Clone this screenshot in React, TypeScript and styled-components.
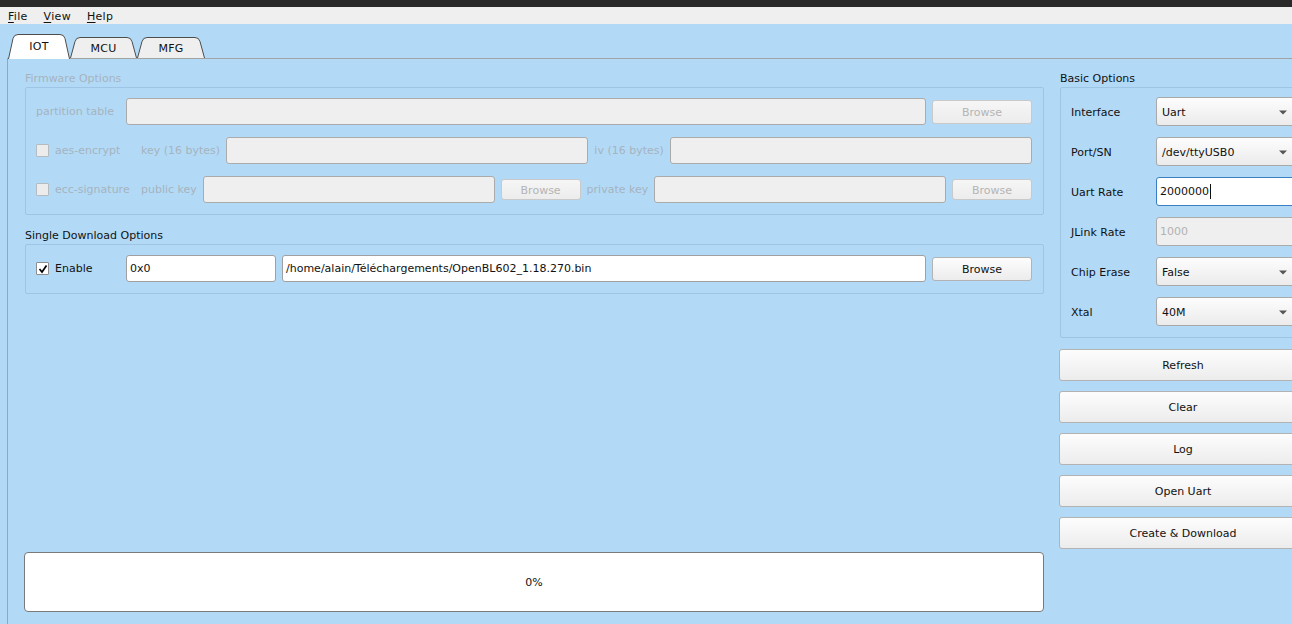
import styled, { createGlobalStyle } from "styled-components"

const BLUE = "#b2daf7"
const DIS_TEXT = "#a6b3bd"

const GlobalStyle = createGlobalStyle`
  html, body {
    margin: 0;
    padding: 0;
    overflow: hidden;
    background: ${BLUE};
  }
  body {
    font-family: "DejaVu Sans", "Liberation Sans", sans-serif;
    font-size: 11px;
    color: #111;
  }
`

const Window = styled.div`
  width: 1340px;
  height: 637px;
  display: flex;
  flex-direction: column;
  background: ${BLUE};
`

const TitleStrip = styled.div`
  height: 7px;
  background: #2a2a2a;
`

const MenuBar = styled.div`
  height: 17px;
  display: flex;
  align-items: center;
  background: #efefef;
`

const MenuItem = styled.span`
  padding: 1px 8px 0;
  line-height: 17px;
  letter-spacing: 0.3px;
  color: #111;

  u {
    text-underline-offset: 2px;
  }
`

const TabBar = styled.div`
  height: 34px;
  display: flex;
  align-items: flex-end;
  padding-left: 8px;
`

const TabShape = styled.div<{ $w: number; $active?: boolean }>`
  position: relative;
  width: ${(p) => p.$w}px;
  height: ${(p) => (p.$active ? 25 : 21)}px;
  margin-bottom: ${(p) => (p.$active ? -1 : 0)}px;
  display: flex;
  align-items: center;
  justify-content: center;
  z-index: ${(p) => (p.$active ? 2 : 1)};

  svg {
    position: absolute;
    left: 0;
    top: 0;
  }
`

const TabLabel = styled.span<{ $active?: boolean }>`
  position: relative;
  margin-top: ${(p) => (p.$active ? -1 : 1)}px;
  letter-spacing: 0.3px;
  color: #111;
`

function Tab({ label, width, active }: { label: string; width: number; active?: boolean }) {
  const h = active ? 25 : 21
  const w = width
  const d = `M0.5 ${h} L5 4.5 Q6 0.5 10 0.5 L${w - 10} 0.5 Q${w - 6} 0.5 ${w - 5} 4.5 L${w - 0.5} ${h}`
  return (
    <TabShape $w={w} $active={active}>
      <svg width={w} height={h} viewBox={`0 0 ${w} ${h}`}>
        <path d={d} fill={active ? "#ffffff" : "#efefef"} stroke="#4d4d4d" strokeWidth="1" />
      </svg>
      <TabLabel $active={active}>{label}</TabLabel>
    </TabShape>
  )
}

const Pane = styled.div`
  flex: 1;
  margin-left: 7px;
  border: 1px solid #a3a3a3;
  padding: 12px 16px 24px 16px;
  display: flex;
  gap: 15px;
  background: ${BLUE};
`

const LeftCol = styled.div`
  flex: 0 0 1020px;
  display: flex;
  flex-direction: column;
`

const RightCol = styled.div`
  flex: 0 0 248px;
  display: flex;
  flex-direction: column;
`

const GroupTitle = styled.div<{ $disabled?: boolean }>`
  height: 16px;
  line-height: 16px;
  padding-left: 1px;
  color: ${(p) => (p.$disabled ? DIS_TEXT : "#111")};
`

const Frame = styled.div<{ $gap?: number; $top?: number; $bottom?: number }>`
  margin-left: 1px;
  border: 1px solid rgba(40, 80, 110, 0.14);
  border-radius: 2px;
  padding: ${(p) => p.$top ?? 10}px 11px ${(p) => p.$bottom ?? 11}px 10px;
  display: flex;
  flex-direction: column;
  gap: ${(p) => p.$gap ?? 12}px;
`

const Row = styled.div<{ $h?: number }>`
  height: ${(p) => p.$h ?? 27}px;
  display: flex;
  align-items: center;
  gap: 6px;
`

const Label = styled.span<{ $w?: number; $disabled?: boolean; $drop?: number }>`
  flex: 0 0 ${(p) => (p.$w ? `${p.$w}px` : "auto")};
  white-space: nowrap;
  padding-top: ${(p) => p.$drop ?? 0}px;
  color: ${(p) => (p.$disabled ? DIS_TEXT : "#111")};
`

const CheckCell = styled.div<{ $w: number }>`
  flex: 0 0 ${(p) => p.$w}px;
  display: flex;
  align-items: center;
  gap: 6px;
`

const CheckBox = styled.span<{ $disabled?: boolean }>`
  width: 11px;
  height: 11px;
  border: 1px solid ${(p) => (p.$disabled ? "#b4bcc2" : "#8e8e8e")};
  border-radius: 1px;
  background: ${(p) => (p.$disabled ? "#ececec" : "#ffffff")};
  display: flex;
  align-items: center;
  justify-content: center;
`

const LineEdit = styled.div<{ $w?: number; $h?: number; $disabled?: boolean; $focused?: boolean }>`
  flex: ${(p) => (p.$w ? `0 0 ${p.$w}px` : "1 1 0")};
  min-width: 0;
  height: ${(p) => p.$h ?? 27}px;
  box-sizing: border-box;
  border: 1px solid ${(p) => (p.$focused ? "#3a7fc1" : p.$disabled ? "#ababab" : "#a0a0a0")};
  border-radius: 3px;
  background: ${(p) => (p.$disabled ? "#efefef" : "#ffffff")};
  color: ${(p) => (p.$disabled ? "#b2b2b2" : "#111")};
  padding: 0 3px;
  display: flex;
  align-items: center;
  white-space: nowrap;
  overflow: hidden;
`

const Caret = styled.span`
  display: inline-block;
  width: 1px;
  height: 15px;
  background: #111;
  margin-left: 1px;
`

const Button = styled.div<{ $w?: number; $h: number; $disabled?: boolean }>`
  flex: 0 0 ${(p) => (p.$w ? `${p.$w}px` : "auto")};
  height: ${(p) => p.$h}px;
  box-sizing: border-box;
  border: 1px solid ${(p) => (p.$disabled ? "#c9c9c9" : "#b3b3b3")};
  border-radius: 3px;
  background: ${(p) =>
    p.$disabled
      ? "linear-gradient(#f6f6f6, #ececec)"
      : "linear-gradient(#fdfdfd, #ececec)"};
  color: ${(p) => (p.$disabled ? "#b4b4b4" : "#111")};
  display: flex;
  align-items: center;
  justify-content: center;
  padding-top: 1px;
`

const Combo = styled.div`
  flex: 1 1 0;
  height: 29px;
  box-sizing: border-box;
  border: 1px solid #a9a9a9;
  border-radius: 3px;
  background: linear-gradient(#fdfdfd, #ebebeb);
  padding: 1px 7px 0 5px;
  display: flex;
  align-items: center;
  justify-content: space-between;
`

const ActionList = styled.div`
  margin-top: 11px;
  display: flex;
  flex-direction: column;
  gap: 10px;
`

const Progress = styled.div`
  margin-top: auto;
  height: 60px;
  box-sizing: border-box;
  border: 1px solid #7a7a7a;
  border-radius: 4px;
  background: #ffffff;
  display: flex;
  align-items: center;
  justify-content: center;
  color: #111;
`

const Spacer = styled.div<{ $h: number }>`
  height: ${(p) => p.$h}px;
  flex: 0 0 auto;
`

function Tick() {
  return (
    <svg width="10" height="10" viewBox="0 0 10 10">
      <path d="M1.5 5 L4 8 L8.5 1.5" fill="none" stroke="#000" strokeWidth="1.7" />
    </svg>
  )
}

function Arrow() {
  return (
    <svg width="8" height="5" viewBox="0 0 8 5">
      <path d="M0 0.5 L8 0.5 L4 4.5 Z" fill="#555" />
    </svg>
  )
}

function ComboBox({ value }: { value: string }) {
  return (
    <Combo>
      <span>{value}</span>
      <Arrow />
    </Combo>
  )
}

const basicRows: { label: string; kind: "combo" | "focus" | "disabled"; value: string }[] = [
  { label: "Interface", kind: "combo", value: "Uart" },
  { label: "Port/SN", kind: "combo", value: "/dev/ttyUSB0" },
  { label: "Uart Rate", kind: "focus", value: "2000000" },
  { label: "JLink Rate", kind: "disabled", value: "1000" },
  { label: "Chip Erase", kind: "combo", value: "False" },
  { label: "Xtal", kind: "combo", value: "40M" },
]

const actions = ["Refresh", "Clear", "Log", "Open Uart", "Create & Download"]

export default function App() {
  return (
    <Window>
      <GlobalStyle />
      <TitleStrip />
      <MenuBar>
        <MenuItem>
          <u>F</u>ile
        </MenuItem>
        <MenuItem>
          <u>V</u>iew
        </MenuItem>
        <MenuItem>
          <u>H</u>elp
        </MenuItem>
      </MenuBar>
      <TabBar>
        <Tab label="IOT" width={62} active />
        <Tab label="MCU" width={67} />
        <Tab label="MFG" width={68} />
      </TabBar>
      <Pane>
        <LeftCol>
          <GroupTitle $disabled>Firmware Options</GroupTitle>
          <Frame>
            <Row>
              <Label $w={84} $disabled>
                partition table
              </Label>
              <LineEdit $disabled />
              <Button $w={100} $h={24} $disabled>
                Browse
              </Button>
            </Row>
            <Row>
              <CheckCell $w={99}>
                <CheckBox $disabled />
                <Label $disabled>aes-encrypt</Label>
              </CheckCell>
              <Label $disabled>key (16 bytes)</Label>
              <LineEdit $disabled />
              <Label $disabled>iv (16 bytes)</Label>
              <LineEdit $disabled />
            </Row>
            <Row>
              <CheckCell $w={99}>
                <CheckBox $disabled />
                <Label $disabled>ecc-signature</Label>
              </CheckCell>
              <Label $disabled>public key</Label>
              <LineEdit $disabled />
              <Button $w={80} $h={21} $disabled>
                Browse
              </Button>
              <Label $disabled>private key</Label>
              <LineEdit $disabled />
              <Button $w={80} $h={21} $disabled>
                Browse
              </Button>
            </Row>
          </Frame>
          <Spacer $h={13} />
          <GroupTitle>Single Download Options</GroupTitle>
          <Frame>
            <Row>
              <CheckCell $w={84}>
                <CheckBox>
                  <Tick />
                </CheckBox>
                <Label>Enable</Label>
              </CheckCell>
              <LineEdit $w={150}>0x0</LineEdit>
              <LineEdit>/home/alain/Téléchargements/OpenBL602_1.18.270.bin</LineEdit>
              <Button $w={100} $h={24}>
                Browse
              </Button>
            </Row>
          </Frame>
          <Progress>0%</Progress>
        </LeftCol>
        <RightCol>
          <GroupTitle>Basic Options</GroupTitle>
          <Frame $top={9} $bottom={11} $gap={11}>
            {basicRows.map((r) => (
              <Row key={r.label} $h={29}>
                <Label $w={79} $drop={2}>
                  {r.label}
                </Label>
                {r.kind === "combo" && <ComboBox value={r.value} />}
                {r.kind === "focus" && (
                  <LineEdit $focused $h={29}>
                    {r.value}
                    <Caret />
                  </LineEdit>
                )}
                {r.kind === "disabled" && (
                  <LineEdit $disabled $h={29}>
                    {r.value}
                  </LineEdit>
                )}
              </Row>
            ))}
          </Frame>
          <ActionList>
            {actions.map((a) => (
              <Button key={a} $h={32}>
                {a}
              </Button>
            ))}
          </ActionList>
        </RightCol>
      </Pane>
    </Window>
  )
}
